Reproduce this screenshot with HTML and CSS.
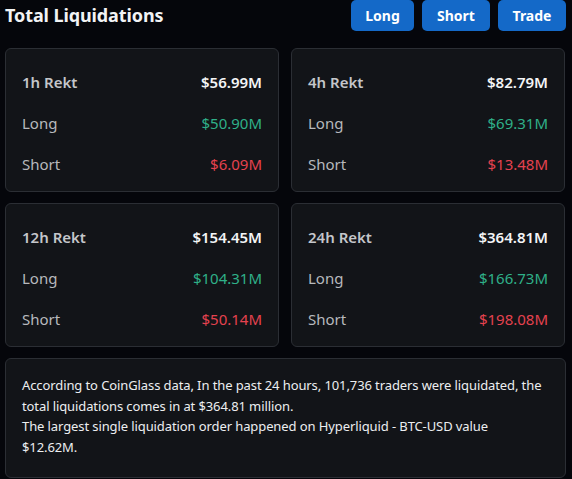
FILE: index.html
```html
<!DOCTYPE html>
<html>
<head>
<meta charset="utf-8">
<link rel="stylesheet" href="styles.css">
</head>
<body>
<div class="page">
  <header class="top">
    <h1 class="title">Total Liquidations</h1>
    <div class="actions">
      <button class="btn">Long</button>
      <button class="btn">Short</button>
      <button class="btn">Trade</button>
    </div>
  </header>
  <section class="grid">
    <div class="card">
      <div class="row head"><span>1h Rekt</span><span class="val">$56.99M</span></div>
      <div class="row"><span>Long</span><span class="up">$50.90M</span></div>
      <div class="row"><span>Short</span><span class="down">$6.09M</span></div>
    </div>
    <div class="card">
      <div class="row head"><span>4h Rekt</span><span class="val">$82.79M</span></div>
      <div class="row"><span>Long</span><span class="up">$69.31M</span></div>
      <div class="row"><span>Short</span><span class="down">$13.48M</span></div>
    </div>
    <div class="card">
      <div class="row head"><span>12h Rekt</span><span class="val">$154.45M</span></div>
      <div class="row"><span>Long</span><span class="up">$104.31M</span></div>
      <div class="row"><span>Short</span><span class="down">$50.14M</span></div>
    </div>
    <div class="card">
      <div class="row head"><span>24h Rekt</span><span class="val">$364.81M</span></div>
      <div class="row"><span>Long</span><span class="up">$166.73M</span></div>
      <div class="row"><span>Short</span><span class="down">$198.08M</span></div>
    </div>
  </section>
  <section class="summary">
    <p>According to CoinGlass data, In the past 24 hours, 101,736 traders were liquidated, the total liquidations comes in at $364.81 million.</p>
    <p>The largest single liquidation order happened on Hyperliquid - BTC-USD value $12.62M.</p>
  </section>
</div>
</body>
</html>
```

FILE: styles.css
```css
html, body {
  margin: 0;
  padding: 0;
  background: #05060b;
}
body {
  font-family: "Noto Sans", "Open Sans", sans-serif;
  color: #e8e9eb;
}
.page {
  width: 560px;
  padding: 0 0 0 5px;
  display: flex;
  flex-direction: column;
}
.top {
  display: flex;
  justify-content: space-between;
  align-items: flex-start;
  height: 48px;
}
.title {
  margin: 2px 0 0 0;
  font-size: 18px;
  font-weight: 700;
  line-height: 26px;
  color: #f2f3f5;
  letter-spacing: -0.1px;
}
.actions {
  display: flex;
  gap: 8px;
  margin-right: -1px;
}
.btn {
  border: none;
  background: #1469c8;
  color: #ffffff;
  font-family: "Noto Sans", sans-serif;
  font-weight: 700;
  font-size: 14px;
  height: 31px;
  border-radius: 5px;
  padding: 0;
  width: 63px;
  cursor: pointer;
}
.btn:nth-child(2) { width: 68px; }
.btn:nth-child(3) { width: 68px; }
.grid {
  display: grid;
  grid-template-columns: 274px 274px;
  column-gap: 12px;
  row-gap: 11px;
}
.card {
  background: #121418;
  border: 1px solid #2b2e34;
  border-radius: 6px;
  height: 144px;
  box-sizing: border-box;
  padding: 12px 16px 7px 16px;
  display: flex;
  flex-direction: column;
}
.row {
  display: flex;
  justify-content: space-between;
  align-items: center;
  height: 41px;
  font-size: 15px;
  color: #b7b9bd;
}
.row.head span:first-child {
  font-weight: 600;
  color: #c4c6ca;
}
.val {
  font-weight: 600;
  color: #f4f5f6;
}
.up { color: #2fb088; }
.down { color: #e5424f; }
.summary {
  margin-top: 11px;
  background: #121418;
  border: 1px solid #2b2e34;
  border-radius: 6px;
  width: 561px;
  box-sizing: border-box;
  padding: 16px 21px 20px 16px;
  font-size: 13px;
  line-height: 20.5px;
  letter-spacing: -0.1px;
  color: #eceef0;
}
.summary p {
  margin: 0;
}
```
